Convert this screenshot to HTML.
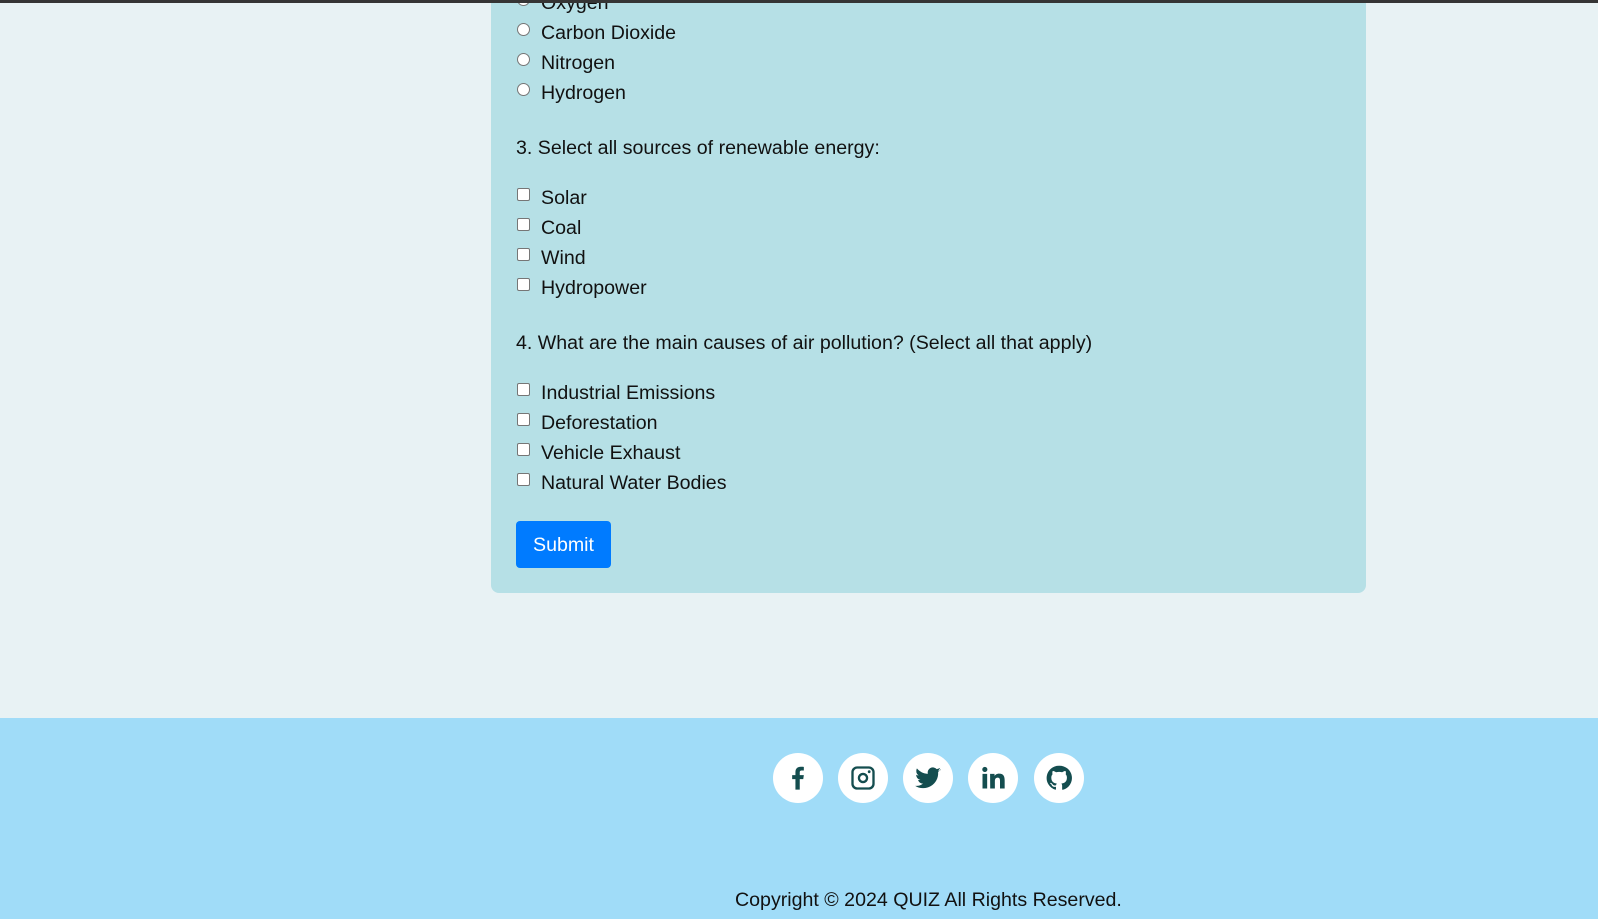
<!DOCTYPE html>
<html><head><meta charset="utf-8"><style>
*{margin:0;padding:0;box-sizing:border-box}
body{width:1598px;height:919px;overflow:hidden;background:#e8f2f4;font-family:"Segoe UI","Liberation Sans",sans-serif;color:#111;position:relative}
.top{position:absolute;left:0;top:0;width:1598px;height:3px;background:#353535;z-index:5}
.card{position:absolute;left:491px;top:-20px;width:875px;height:613px;background:#b6e0e6;border-radius:0 0 8px 8px}
.t{position:absolute;font-size:19.6px;line-height:30px;white-space:nowrap}
.r{position:absolute;left:517px;width:13px;height:13px;border:1px solid #767676;background:#fff;border-radius:50%}
.c{position:absolute;left:517px;width:13px;height:13px;border:1px solid #767676;background:#fff;border-radius:2px}
.btn{position:absolute;left:516px;top:521px;width:95px;height:47px;background:#007bff;border-radius:4px;color:#fff;font-size:19.6px;line-height:48px;text-align:center}
.foot{position:absolute;left:0;top:718px;width:1598px;height:201px;background:#a0dcf8}
.ic{position:absolute;top:753px;width:50px;height:50px;border-radius:50%;background:#fff;display:flex;align-items:center;justify-content:center}
.ic svg{width:28px;height:28px;fill:#144d4f}
</style></head><body>
<div class="top"></div>
<div class="card"></div>
<div class="r" style="top:-7px"></div><div class="t" style="left:541px;top:-12px">Oxygen</div>
<div class="r" style="top:23px"></div><div class="t" style="left:541px;top:18px">Carbon Dioxide</div>
<div class="r" style="top:53px"></div><div class="t" style="left:541px;top:48px">Nitrogen</div>
<div class="r" style="top:83px"></div><div class="t" style="left:541px;top:78px">Hydrogen</div>
<div class="t" style="left:516px;top:133px">3. Select all sources of renewable energy:</div>
<div class="c" style="top:188px"></div><div class="t" style="left:541px;top:183px">Solar</div>
<div class="c" style="top:218px"></div><div class="t" style="left:541px;top:213px">Coal</div>
<div class="c" style="top:248px"></div><div class="t" style="left:541px;top:243px">Wind</div>
<div class="c" style="top:278px"></div><div class="t" style="left:541px;top:273px">Hydropower</div>
<div class="t" style="left:516px;top:328px">4. What are the main causes of air pollution? (Select all that apply)</div>
<div class="c" style="top:383px"></div><div class="t" style="left:541px;top:378px">Industrial Emissions</div>
<div class="c" style="top:413px"></div><div class="t" style="left:541px;top:408px">Deforestation</div>
<div class="c" style="top:443px"></div><div class="t" style="left:541px;top:438px">Vehicle Exhaust</div>
<div class="c" style="top:473px"></div><div class="t" style="left:541px;top:468px">Natural Water Bodies</div>
<div class="btn">Submit</div>
<div class="foot"></div>
<div class="ic" style="left:773px"><svg viewBox="0 0 24 24"><path d="M13.5 22v-9h3l.5-3.5h-3.5V7.3c0-1 .3-1.7 1.8-1.7H17V2.5c-.3 0-1.4-.1-2.7-.1-2.7 0-4.5 1.6-4.5 4.6v2.5H7V13h2.8v9z"/></svg></div>
<div class="ic" style="left:838px"><svg viewBox="0 0 24 24"><path d="M7 2h10a5 5 0 0 1 5 5v10a5 5 0 0 1-5 5H7a5 5 0 0 1-5-5V7a5 5 0 0 1 5-5zm0 2a3 3 0 0 0-3 3v10a3 3 0 0 0 3 3h10a3 3 0 0 0 3-3V7a3 3 0 0 0-3-3zm5 3.5a4.5 4.5 0 1 1 0 9 4.5 4.5 0 0 1 0-9zm0 2a2.5 2.5 0 1 0 0 5 2.5 2.5 0 0 0 0-5zM17.3 5.4a1.2 1.2 0 1 1 0 2.4 1.2 1.2 0 0 1 0-2.4z"/></svg></div>
<div class="ic" style="left:903px"><svg viewBox="0 0 24 24"><path d="M23 5.1c-.8.4-1.7.6-2.6.7.9-.6 1.6-1.4 2-2.5-.9.5-1.9.9-2.9 1.1a4.5 4.5 0 0 0-7.700 4.1C8 8.3 4.7 6.5 2.5 3.8a4.5 4.5 0 0 0 1.4 6c-.7 0-1.4-.2-2-.6 0 2.2 1.500 4 3.600 4.4-.7.2-1.4.2-2 .1.6 1.8 2.2 3.1 4.2 3.1A9 9 0 0 1 1 18.7 12.8 12.8 0 0 0 20.7 7.3V6.7c.9-.6 1.7-1.4 2.3-2.3z"/></svg></div>
<div class="ic" style="left:968px"><svg viewBox="0 0 24 24"><path d="M3 8.5h4V21H3zM5 2.5a2.2 2.2 0 1 1 0 4.4 2.2 2.2 0 0 1 0-4.4zM9.5 8.5h3.8v1.7c.6-1 1.9-2 3.9-2 4 0 4.8 2.6 4.8 6V21h-4v-6c0-1.5 0-3.3-2-3.3s-2.4 1.6-2.4 3.2V21h-4z"/></svg></div>
<div class="ic" style="left:1034px"><svg viewBox="0 0 24 24"><path d="M12 1.5a10.5 10.5 0 0 0-3.3 20.5c.5.1.7-.2.7-.5v-2c-2.9.6-3.500-1.2-3.500-1.2-.5-1.2-1.2-1.5-1.2-1.5-1-.6.1-.6.1-.6 1 .1 1.6 1.1 1.6 1.1.9 1.6 2.5 1.1 3.1.9.1-.7.4-1.1.7-1.4-2.3-.3-4.8-1.2-4.8-5.2 0-1.1.4-2.1 1.1-2.8-.1-.3-.5-1.3.1-2.8 0 0 .9-.3 2.9 1.1a10 10 0 0 1 5.2 0c2-1.4 2.9-1.1 2.9-1.1.6 1.5.2 2.5.1 2.8.7.7 1.1 1.7 1.1 2.8 0 4-2.5 4.9-4.8 5.2.4.3.7 1 .7 1.9v2.9c0 .3.2.6.7.5A10.5 10.5 0 0 0 12 1.5z"/></svg></div>
<div class="t" style="left:735px;top:885px">Copyright © 2024 QUIZ All Rights Reserved.</div>
</body></html>
